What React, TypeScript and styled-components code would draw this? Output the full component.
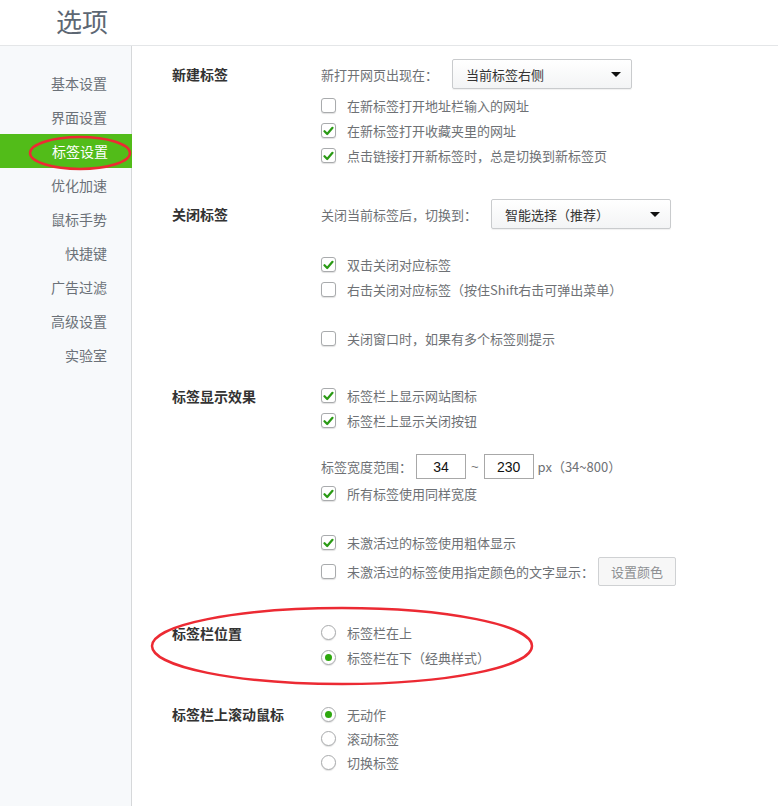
import React from 'react';
import styled, { createGlobalStyle } from 'styled-components';

const GlobalStyle = createGlobalStyle`
  html, body {
    margin: 0;
    padding: 0;
    background: #fff;
  }
  body {
    font-family: "Noto Sans CJK SC", "Noto Sans", "Liberation Sans", sans-serif;
    font-size: 13px;
    color: #666;
    text-spacing-trim: space-all;
  }
  * { box-sizing: border-box; }
`;

const Page = styled.div`
  position: relative;
  width: 778px;
  height: 806px;
  display: flex;
  flex-direction: column;
  overflow: hidden;
`;

const Header = styled.div`
  height: 46px;
  flex: none;
  border-bottom: 1px solid #e4e6e8;
  padding-left: 56px;
  display: flex;
  align-items: center;
`;

const Title = styled.h1`
  margin: 0;
  font-size: 26px;
  font-weight: normal;
  color: #5d6773;
  line-height: 1;
  margin-top: -4px;
`;

const Body = styled.div`
  flex: 1;
  display: flex;
`;

const Sidebar = styled.nav`
  width: 132px;
  flex: none;
  background: #f7f9fb;
  border-right: 1px solid #d6d8da;
  padding-top: 20px;
`;

const NavItem = styled.div<{ $active?: boolean }>`
  height: 34px;
  display: flex;
  align-items: center;
  justify-content: flex-end;
  padding-right: 24px;
  font-size: 14px;
  color: ${(p) => (p.$active ? '#fff' : '#6b7178')};
  background: ${(p) => (p.$active ? '#52bc19' : 'transparent')};
  margin-right: ${(p) => (p.$active ? '-1px' : '0')};
`;

const Content = styled.main`
  flex: 1;
  padding: 13px 0 0 40px;
  display: flex;
  flex-direction: column;
`;

const Section = styled.section<{ $gap?: number }>`
  display: grid;
  grid-template-columns: 149px 1fr;
  margin-top: ${(p) => p.$gap ?? 0}px;
`;

const SectionTitle = styled.div<{ $h: number }>`
  height: ${(p) => p.$h}px;
  display: flex;
  align-items: center;
  font-size: 14px;
  font-weight: bold;
  color: #333;
`;

const Rows = styled.div`
  display: flex;
  flex-direction: column;
`;

const Row = styled.div<{ $h?: number }>`
  height: ${(p) => p.$h ?? 25}px;
  display: flex;
  align-items: center;
  white-space: nowrap;
  color: #6e7175;
`;

const Spacer = styled.div<{ $h: number }>`
  height: ${(p) => p.$h}px;
`;

const FieldLabel = styled.span<{ $w?: number }>`
  display: inline-block;
  min-width: ${(p) => p.$w ?? 0}px;
`;

const SelectBox = styled.div`
  width: 180px;
  height: 30px;
  border: 1px solid #c9cbcd;
  border-radius: 2px;
  background: linear-gradient(#ffffff, #f3f4f5);
  box-shadow: 0 1px 1px rgba(0, 0, 0, 0.06);
  display: flex;
  align-items: center;
  justify-content: space-between;
  padding: 0 10px 0 13px;
  color: #333;
  font-size: 13px;
`;

const Caret = styled.span`
  width: 0;
  height: 0;
  border-left: 5px solid transparent;
  border-right: 5px solid transparent;
  border-top: 5px solid #111;
`;

const Box = styled.span<{ $round?: boolean }>`
  width: 15px;
  height: 15px;
  flex: none;
  border: 1px solid #a9abad;
  border-radius: ${(p) => (p.$round ? '50%' : '3px')};
  background: #fff;
  box-shadow: 0 1px 1px rgba(0, 0, 0, 0.12);
  margin-right: 11px;
  display: flex;
  align-items: center;
  justify-content: center;
`;

const Dot = styled.span`
  width: 7px;
  height: 7px;
  border-radius: 50%;
  background: #2ea80e;
`;

const NumInput = styled.div`
  width: 50px;
  height: 25px;
  border: 1px solid #a8a8a8;
  display: flex;
  align-items: center;
  justify-content: center;
  font-family: "Liberation Sans", Arial, sans-serif;
  font-size: 14px;
  color: #111;
`;

const Tilde = styled.span`
  margin: 0 5px;
  font-family: "Liberation Sans", Arial, sans-serif;
  color: #777;
`;

const Unit = styled.span`
  margin-left: 4px;
  font-size: 13px;
`;

const Button = styled.button`
  height: 29px;
  width: 78px;
  margin-left: 4px;
  border: 1px solid #cfd1d3;
  border-radius: 2px;
  background: #f7f7f7;
  color: #8d8f92;
  font-family: inherit;
  font-size: 13px;
  padding: 0;
`;

const Overlay = styled.svg`
  position: absolute;
  left: 0;
  top: 0;
  pointer-events: none;
`;

const Check = () => (
  <svg width="11" height="10" viewBox="0 0 11 10">
    <path d="M1.5 5.2 L4.2 8 L9.5 1.8" fill="none" stroke="#2a9a14" strokeWidth="2.2" strokeLinecap="round" strokeLinejoin="round" />
  </svg>
);

const Checkbox = ({ checked, children }: { checked?: boolean; children: React.ReactNode }) => (
  <>
    <Box>{checked && <Check />}</Box>
    <span>{children}</span>
  </>
);

const Radio = ({ checked, children }: { checked?: boolean; children: React.ReactNode }) => (
  <>
    <Box $round>{checked && <Dot />}</Box>
    <span>{children}</span>
  </>
);

const navItems = ['基本设置', '界面设置', '标签设置', '优化加速', '鼠标手势', '快捷键', '广告过滤', '高级设置', '实验室'];

export default function App() {
  return (
    <>
      <GlobalStyle />
      <Page>
        <Header>
          <Title>选项</Title>
        </Header>
        <Body>
          <Sidebar>
            {navItems.map((n) => (
              <NavItem key={n} $active={n === '标签设置'}>{n}</NavItem>
            ))}
          </Sidebar>
          <Content>
            <Section>
              <SectionTitle $h={30}>新建标签</SectionTitle>
              <Rows>
                <Row $h={30}>
                  <FieldLabel $w={131}>新打开网页出现在：</FieldLabel>
                  <SelectBox>当前标签右侧<Caret /></SelectBox>
                </Row>
                <Spacer $h={4} />
                <Row><Checkbox>在新标签打开地址栏输入的网址</Checkbox></Row>
                <Row><Checkbox checked>在新标签打开收藏夹里的网址</Checkbox></Row>
                <Row><Checkbox checked>点击链接打开新标签时，总是切换到新标签页</Checkbox></Row>
              </Rows>
            </Section>

            <Section $gap={31}>
              <SectionTitle $h={30}>关闭标签</SectionTitle>
              <Rows>
                <Row $h={30}>
                  <FieldLabel $w={170}>关闭当前标签后，切换到：</FieldLabel>
                  <SelectBox>智能选择（推荐）<Caret /></SelectBox>
                </Row>
                <Spacer $h={23} />
                <Row><Checkbox checked>双击关闭对应标签</Checkbox></Row>
                <Row><Checkbox>右击关闭对应标签（按住Shift右击可弹出菜单）</Checkbox></Row>
                <Spacer $h={24} />
                <Row><Checkbox>关闭窗口时，如果有多个标签则提示</Checkbox></Row>
              </Rows>
            </Section>

            <Section $gap={32}>
              <SectionTitle $h={25}>标签显示效果</SectionTitle>
              <Rows>
                <Row><Checkbox checked>标签栏上显示网站图标</Checkbox></Row>
                <Row><Checkbox checked>标签栏上显示关闭按钮</Checkbox></Row>
                <Spacer $h={19} />
                <Row $h={29}>
                  <FieldLabel $w={95}>标签宽度范围：</FieldLabel>
                  <NumInput>34</NumInput>
                  <Tilde>~</Tilde>
                  <NumInput>230</NumInput>
                  <Unit>px（34~800）</Unit>
                </Row>
                <Row><Checkbox checked>所有标签使用同样宽度</Checkbox></Row>
                <Spacer $h={24} />
                <Row><Checkbox checked>未激活过的标签使用粗体显示</Checkbox></Row>
                <Row $h={32}>
                  <Checkbox>未激活过的标签使用指定颜色的文字显示：</Checkbox>
                  <Button>设置颜色</Button>
                </Row>
              </Rows>
            </Section>

            <Section $gap={33}>
              <SectionTitle $h={25}>标签栏位置</SectionTitle>
              <Rows>
                <Row><Radio>标签栏在上</Radio></Row>
                <Row><Radio checked>标签栏在下（经典样式）</Radio></Row>
              </Rows>
            </Section>

            <Section $gap={32}>
              <SectionTitle $h={24}>标签栏上滚动鼠标</SectionTitle>
              <Rows>
                <Row $h={24}><Radio checked>无动作</Radio></Row>
                <Row $h={24}><Radio>滚动标签</Radio></Row>
                <Row $h={24}><Radio>切换标签</Radio></Row>
              </Rows>
            </Section>
          </Content>
        </Body>
        <Overlay width="778" height="806" viewBox="0 0 778 806">
          <ellipse cx="80" cy="153" rx="50" ry="16" fill="none" stroke="#ec2a33" strokeWidth="2.5" />
          <ellipse cx="342" cy="646" rx="190" ry="38" fill="none" stroke="#ec2a33" strokeWidth="2.5" />
        </Overlay>
      </Page>
    </>
  );
}
